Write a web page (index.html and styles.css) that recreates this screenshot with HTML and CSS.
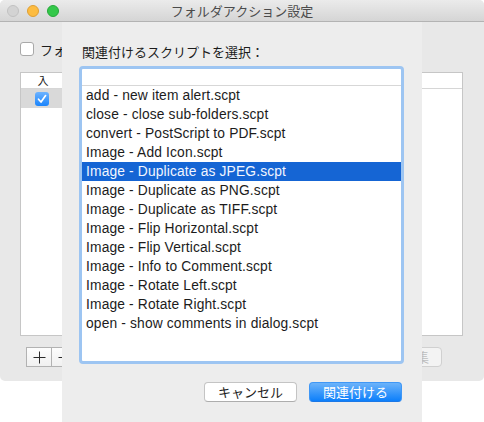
FILE: index.html
```html
<!DOCTYPE html>
<html lang="ja">
<head>
<meta charset="utf-8">
<title>フォルダアクション設定</title>
<link rel="stylesheet" href="styles.css">
</head>
<body>
<div class="window">
  <div class="titlebar">
    <div class="lights">
      <span class="light light-close"></span>
      <span class="light light-min"></span>
      <span class="light light-max"></span>
    </div>
    <div class="title">フォルダアクション設定</div>
    <div></div>
  </div>
  <div class="win-body">
    <div class="enable">
      <span class="cb"></span>
      <span class="enable-text">フォ</span>
    </div>
    <div class="panes">
      <div class="table table-left">
        <div class="thead">
          <span class="th-check">入</span>
        </div>
        <div class="trow trow-sel">
          <span class="cb-on">
            <svg width="14" height="14" viewBox="0 0 14 14"><path d="M3.5 7.2 L6 10 L10.6 3.6" fill="none" stroke="#fff" stroke-width="1.7" stroke-linecap="round" stroke-linejoin="round"/></svg>
          </span>
        </div>
      </div>
      <div class="table table-right">
        <div class="thead"></div>
      </div>
    </div>
    <div class="bottom-bar">
      <div class="seg">
        <span class="seg-btn">
          <svg width="13" height="13" viewBox="0 0 13 13"><path d="M6.5 0.5 V12.5 M0.5 6.5 H12.5" stroke="#2a2a2a" stroke-width="1"/></svg>
        </span>
        <span class="seg-btn">
          <svg width="13" height="13" viewBox="0 0 13 13"><path d="M0.5 6.5 H12.5" stroke="#2a2a2a" stroke-width="1"/></svg>
        </span>
      </div>
      <span class="edit-btn">編集</span>
    </div>
  </div>
</div>

<div class="sheet">
  <div class="sheet-label">関連付けるスクリプトを選択：</div>
  <div class="list">
    <div class="list-head"></div>
    <div class="list-item">add - new item alert.scpt</div>
    <div class="list-item">close - close sub-folders.scpt</div>
    <div class="list-item">convert - PostScript to PDF.scpt</div>
    <div class="list-item">Image - Add Icon.scpt</div>
    <div class="list-item list-item-sel">Image - Duplicate as JPEG.scpt</div>
    <div class="list-item">Image - Duplicate as PNG.scpt</div>
    <div class="list-item">Image - Duplicate as TIFF.scpt</div>
    <div class="list-item">Image - Flip Horizontal.scpt</div>
    <div class="list-item">Image - Flip Vertical.scpt</div>
    <div class="list-item">Image - Info to Comment.scpt</div>
    <div class="list-item">Image - Rotate Left.scpt</div>
    <div class="list-item">Image - Rotate Right.scpt</div>
    <div class="list-item">open - show comments in dialog.scpt</div>
  </div>
  <div class="sheet-buttons">
    <span class="btn btn-cancel">キャンセル</span>
    <span class="btn btn-default">関連付ける</span>
  </div>
</div>
</body>
</html>
```

FILE: styles.css
```css
* { box-sizing: border-box; }

html, body {
  margin: 0;
  padding: 0;
}

body {
  width: 484px;
  height: 422px;
  background: #ffffff;
  position: relative;
  overflow: hidden;
  font-family: "Noto Sans CJK JP", "Liberation Sans", sans-serif;
  color: #1c1c1c;
}

/* ---------- background window ---------- */
.window {
  width: 484px;
  height: 381px;
  background: #e8e8e8;
  border-radius: 5px;
  display: flex;
  flex-direction: column;
  overflow: hidden;
}

.titlebar {
  height: 22px;
  flex: none;
  border-bottom: 1px solid #b3b3b3;
  background: linear-gradient(#ebebeb, #d5d5d5);
  display: grid;
  grid-template-columns: 1fr auto 1fr;
  align-items: center;
}

.lights {
  display: flex;
  gap: 8px;
  padding-left: 7px;
}

.light {
  width: 12px;
  height: 12px;
  border-radius: 50%;
  display: block;
}
.light-close { background: #d3d3d3; border: 1px solid #c1c1c1; }
.light-min   { background: #fdbc40; border: 1px solid #de9f34; }
.light-max   { background: #34c84a; border: 1px solid #27a83a; }

.title {
  font-size: 13px;
  line-height: 21px;
  color: #4b4b4b;
}

.win-body {
  flex: 1;
  display: flex;
  flex-direction: column;
  padding: 20px 21px 0 20px;
}

.enable {
  display: flex;
  align-items: center;
  gap: 6px;
  height: 14px;
  font-size: 13px;
}

.cb {
  width: 14px;
  height: 14px;
  border: 1px solid #a9a9a9;
  border-radius: 3px;
  background: #fff;
  flex: none;
}

.enable-text {
  white-space: nowrap;
}

.panes {
  margin-top: 16px;
  height: 264px;
  display: flex;
  gap: 12px;
}

.table {
  background: #fff;
  border: 1px solid #c6c6c6;
  height: 264px;
}
.table-left { width: 200px; }
.table-right { flex: 1; }

.thead {
  height: 16px;
  border-bottom: 1px solid #d6d6d6;
  display: flex;
  align-items: center;
  font-size: 11px;
  color: #1c1c1c;
}

.th-check {
  width: 44px;
  text-align: center;
  line-height: 15px;
}

.trow {
  height: 19px;
  display: flex;
  align-items: center;
}
.trow-sel { background: #d9d9d9; }

.cb-on {
  width: 14px;
  height: 14px;
  margin-left: 14px;
  border-radius: 3px;
  background: linear-gradient(#6db3ff, #1a84fb);
  display: block;
  flex: none;
}
.cb-on svg { display: block; }

.bottom-bar {
  margin-top: 11px;
  height: 20px;
  display: flex;
  justify-content: space-between;
  padding-left: 6px;
  padding-right: 21px;
}

.seg { display: flex; }

.seg-btn {
  width: 26px;
  height: 20px;
  border: 1px solid #b2b2b2;
  background: linear-gradient(#fdfdfd, #f0f0f0);
  display: flex;
  align-items: center;
  justify-content: center;
}
.seg-btn + .seg-btn { border-left: none; }

.edit-btn {
  width: 52px;
  height: 20px;
  border: 1px solid #d0d0d0;
  border-radius: 4px;
  background: #f3f3f3;
  color: #bdbdbd;
  font-size: 13px;
  line-height: 18px;
  text-align: center;
}

/* ---------- sheet ---------- */
.sheet {
  position: absolute;
  left: 62px;
  top: 22px;
  width: 360px;
  height: 400px;
  background: #ededed;
  display: flex;
  flex-direction: column;
  padding: 22px 18px 0 17px;
}

.sheet-label {
  font-size: 13px;
  line-height: 16px;
  padding-left: 3px;
  color: #1c1c1c;
}

.list {
  margin-top: 6px;
  height: 298px;
  border: 3px solid #9dc5f2;
  border-radius: 4px;
  background: #fff;
  overflow: hidden;
}

.list-head {
  height: 17px;
  border-bottom: 1px solid #d7d7d7;
}

.list-item {
  height: 19px;
  line-height: 19px;
  padding-left: 4px;
  font-family: "Liberation Sans", "Noto Sans CJK JP", sans-serif;
  font-size: 13.8px;
  letter-spacing: 0.15px;
  color: #1c1c1c;
  white-space: nowrap;
}

.list-item-sel {
  background: #1565d4;
  color: #f2f6ff;
}

.sheet-buttons {
  margin-top: 18px;
  display: flex;
  justify-content: flex-end;
  gap: 12px;
  padding-right: 2px;
}

.btn {
  width: 93px;
  height: 20px;
  border-radius: 4px;
  font-size: 13px;
  line-height: 18px;
  text-align: center;
  display: block;
}

.btn-cancel {
  background: #ffffff;
  border: 1px solid #c4c4c4;
  border-bottom-color: #adadad;
  color: #1c1c1c;
}

.btn-default {
  background: linear-gradient(#6cb3fa, #0c7ffb);
  border: 1px solid #3f97f6;
  border-bottom-color: #1c78e6;
  color: #ffffff;
}
```
